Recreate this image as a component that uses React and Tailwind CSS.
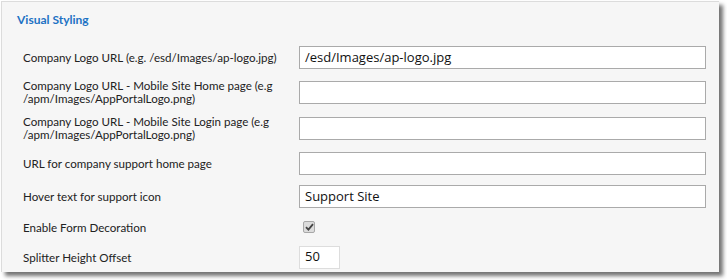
import React from "react";

const font = { fontFamily: 'Lato, "Open Sans", sans-serif' };
const inputFont = { fontFamily: '"Open Sans", "Noto Sans", sans-serif' };

function Label({ children }) {
  return (
    <div className="w-[277px] shrink-0 whitespace-nowrap pl-[21px] text-[11.6px] leading-[13px] text-[#222]">
      {children}
    </div>
  );
}

function TextBox({ value }) {
  return (
    <div
      className="ml-[20px] w-[407px] h-[23px] shrink-0 border border-[#aaa] bg-white flex items-center px-[5px] text-[13px] text-[#111]"
      style={inputFont}
    >
      {value}
    </div>
  );
}

export default function App() {
  return (
    <div className="w-[727px] h-[280px] bg-white" style={font}>
      <div className="ml-[1px] mt-[1px] w-[718px] h-[271px] bg-[#f6f6f6] border-t border-l border-[#dcdcdc] shadow-[4px_4px_4px_rgba(0,0,0,0.55)] flex flex-col">
        <div className="h-[39px] pl-[15px] pt-[9px] text-[12px] font-bold text-[#1d72c4]">
          Visual Styling
        </div>
        <div className="flex items-center h-[34px]">
          <Label>Company Logo URL (e.g. /esd/Images/ap-logo.jpg)</Label>
          <TextBox value="/esd/Images/ap-logo.jpg" />
        </div>
        <div className="flex items-center h-[35px]">
          <Label>
            Company Logo URL - Mobile Site Home page (e.g
            <br />
            /apm/Images/AppPortalLogo.png)
          </Label>
          <TextBox value="" />
        </div>
        <div className="flex items-center h-[37px]">
          <Label>
            Company Logo URL - Mobile Site Login page (e.g
            <br />
            /apm/Images/AppPortalLogo.png)
          </Label>
          <TextBox value="" />
        </div>
        <div className="flex items-center h-[35px]">
          <Label>URL for company support home page</Label>
          <TextBox value="" />
        </div>
        <div className="flex items-center h-[31px]">
          <Label>Hover text for support icon</Label>
          <TextBox value="Support Site" />
        </div>
        <div className="flex items-center h-[30px]">
          <Label>Enable Form Decoration</Label>
          <div className="ml-[24px] w-[12px] h-[12px] rounded-[2px] border border-[#a8a8a8] bg-[#dcdcdc] flex items-center justify-center">
            <svg width="9" height="8" viewBox="0 0 9 8">
              <path d="M1 4.2 L3.4 6.6 L8 1.2" stroke="#444" strokeWidth="1.8" fill="none" />
            </svg>
          </div>
        </div>
        <div className="flex items-center h-[30px]">
          <Label>Splitter Height Offset</Label>
          <div
            className="ml-[20px] w-[41px] h-[23px] border border-[#ddd] bg-white flex items-center px-[5px] text-[13px] text-[#111]"
            style={inputFont}
          >
            50
          </div>
        </div>
      </div>
    </div>
  );
}
